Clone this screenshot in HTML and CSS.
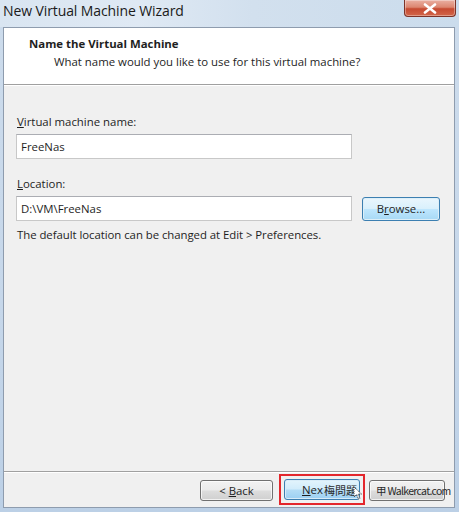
FILE: index.html
```html
<!DOCTYPE html>
<html>
<head>
<meta charset="utf-8">
<link rel="stylesheet" href="styles.css">
</head>
<body>
<div class="window">
  <div class="titlebar">
    <span class="title">New Virtual Machine Wizard</span>
    <span class="close">
      <svg width="16" height="11" viewBox="0 0 16 11"><path d="M3 1.5 L13 9.5 M13 1.5 L3 9.5" stroke="#fff" stroke-width="2.6" stroke-linecap="round"/></svg>
    </span>
  </div>
  <div class="client">
    <div class="header">
      <div class="h-title">Name the Virtual Machine</div>
      <div class="h-sub">What name would you like to use for this virtual machine?</div>
    </div>
    <div class="content">
      <div class="label"><u>V</u>irtual machine name:</div>
      <div class="row">
        <div class="input">FreeNas</div>
      </div>
      <div class="label second"><u>L</u>ocation:</div>
      <div class="row">
        <div class="input">D:\VM\FreeNas</div>
        <div class="btn browse"><span class="focus">B<u>r</u>owse...</span></div>
      </div>
      <div class="note">The default location can be changed at Edit &gt; Preferences.</div>
    </div>
    <div class="footer">
      <div class="btn">&lt;&nbsp;<u>B</u>ack</div>
      <div class="next-wrap">
        <div class="btn next"><u>N</u>ex</div>
      </div>
      <div class="btn cancel"></div>
      <span class="wm wm-cjk">梅問題</span>
      <svg class="wm-icon" width="14" height="14" viewBox="0 0 14 14"><path d="M3 1 L3 11 L5.5 8.5 L7.5 13 L9 12.3 L7 8 L10.5 8 Z" fill="#fff" stroke="#333" stroke-width="0.9" stroke-dasharray="1.2 0.8"/></svg>
      <span class="wm wm-latin">甲 Walkercat.com</span>
    </div>
  </div>
</div>
</body>
</html>
```

FILE: styles.css
```css
html, body {
  margin: 0;
  padding: 0;
}
body {
  width: 459px;
  height: 512px;
  overflow: hidden;
  font-family: "Open Sans", "Noto Sans", "Liberation Sans", sans-serif;
  font-size: 11.4px;
  color: #1e1e1e;
  background: linear-gradient(180deg, #cddcec 0%, #c6d7ea 60%, #bcd0e6 100%);
}
.window {
  display: flex;
  flex-direction: column;
  height: 512px;
}
.titlebar {
  height: 27px;
  display: flex;
  align-items: flex-start;
  background: linear-gradient(90deg, #d9e5f1 0%, #dfe9f4 30%, #d2e0ee 55%, #cbdcec 100%);
}
.title {
  font-family: "Open Sans", "Noto Sans", sans-serif;
  font-size: 14px;
  color: #1a1a1a;
  padding: 1px 0 0 3px;
  letter-spacing: -0.1px;
}
.close {
  margin-left: auto;
  margin-right: 3px;
  width: 52px;
  height: 17px;
  box-sizing: border-box;
  border: 1px solid #7d3328;
  border-top: none;
  border-radius: 0 0 4px 4px;
  background: linear-gradient(180deg, #eab0a2 0%, #dc8670 45%, #c64a31 55%, #d2664a 100%);
  display: flex;
  align-items: center;
  justify-content: center;
  box-shadow: inset 0 0 0 1px rgba(255,255,255,0.35);
}
.client {
  flex: 1;
  margin: 0 4px 4px 3px;
  border: 1px solid #8e9cae;
  display: flex;
  flex-direction: column;
  background: #f0f0f0;
}
.header {
  background: #fff;
  height: 57px;
  box-sizing: border-box;
  padding-top: 8px;
  border-bottom: 1px solid #a0a0a0;
  box-shadow: 0 1px 0 #fff;
}
.h-title {
  font-weight: bold;
  padding-left: 25px;
  line-height: 15px;
}
.h-sub {
  padding-left: 50px;
  margin-top: 3px;
  line-height: 15px;
}
.content {
  flex: 1;
  padding: 29px 0 0 12px;
}
.label {
  line-height: 15px;
  padding-left: 1px;
}
.label.second {
  margin-top: 17px;
}
.row {
  display: flex;
  align-items: center;
  gap: 10px;
  margin-top: 5px;
}
.input {
  width: 336px;
  height: 25px;
  box-sizing: border-box;
  background: #fff;
  border: 1px solid #c8c8c8;
  border-top-color: #abadb3;
  padding: 0 0 0 4px;
  line-height: 23px;
}
.btn {
  width: 75px;
  height: 21px;
  box-sizing: border-box;
  border: 1px solid #707070;
  border-radius: 3px;
  background: linear-gradient(180deg, #f2f2f2 0%, #ebebeb 48%, #dddddd 52%, #cfcfcf 100%);
  display: flex;
  align-items: center;
  justify-content: center;
  line-height: 15px;
  box-shadow: inset 0 0 0 1px rgba(255,255,255,0.7);
}
.browse {
  width: 78px;
  height: 24px;
  border-color: #3c7fb1;
  background: linear-gradient(180deg, #eaf6fd 0%, #d9f0fc 48%, #bee6fd 52%, #a7d9f5 100%);
  box-shadow: inset 0 0 0 1px #ddeff8;
}
.browse .focus {
  padding: 0 2px;
}
.note {
  margin-top: 6px;
  line-height: 15px;
  padding-left: 1px;
  letter-spacing: -0.05px;
}
.footer {
  position: relative;
  height: 35px;
  border-top: 1px solid #a0a0a0;
  box-shadow: inset 0 1px 0 #fff;
  display: flex;
  align-items: center;
  justify-content: flex-end;
  padding-right: 9px;
}
.footer .btn {
  margin-top: 1px;
}
.footer > .btn:first-child {
  width: 73px;
}
.next-wrap {
  margin-left: 6px;
  margin-right: 4px;
  padding: 3px;
  border: 2px solid #e3262c;
}
.next {
  width: 76px;
  border-color: #3c7fb1;
  justify-content: flex-start;
  padding-left: 17px;
  background: linear-gradient(180deg, #e3f4fc 0%, #d1ecfb 48%, #b4ddf6 52%, #9cd0f2 100%);
  box-shadow: inset 0 0 0 1px #d8ecf8;
}
.footer .next { margin-top: 0; }
.cancel {
  width: 76px;
}
.wm {
  position: absolute;
  top: 11px;
  white-space: nowrap;
  line-height: 15px;
  color: #2a2a2a;
}
.wm-cjk {
  left: 320px;
  font-family: "Noto Sans CJK TC", sans-serif;
  font-size: 11px;
}
.wm-icon {
  position: absolute;
  left: 347px;
  top: 14px;
}
.wm-latin {
  left: 372px;
  font-family: "Noto Sans CJK TC", "Noto Sans", sans-serif;
  font-size: 10.5px;
  letter-spacing: -0.7px;
}
```
